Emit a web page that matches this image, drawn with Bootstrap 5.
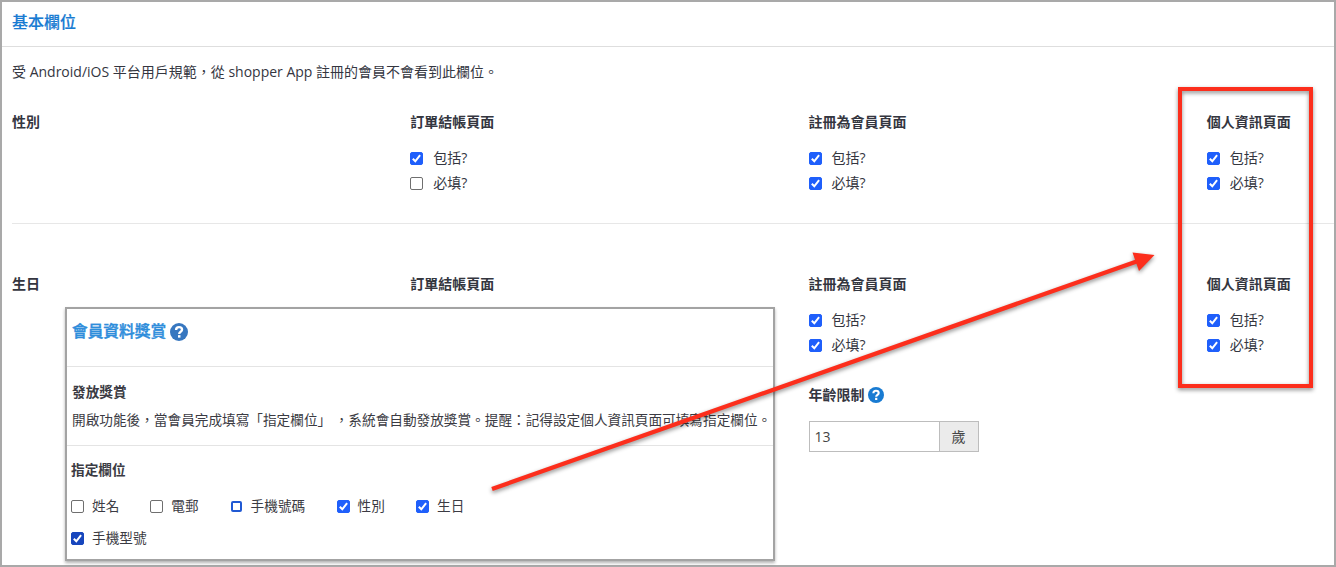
<!DOCTYPE html>
<html lang="zh-Hant">
<head>
<meta charset="utf-8">
<meta name="viewport" content="width=device-width, initial-scale=1">
<title>基本欄位</title>
<link href="https://cdn.jsdelivr.net/npm/bootstrap@5.3.0/dist/css/bootstrap.min.css" rel="stylesheet">
<script src="https://cdn.jsdelivr.net/npm/bootstrap@5.3.0/dist/js/bootstrap.bundle.min.js" defer></script>
<style>
  body { font: 14px/20px "Open Sans", "Noto Sans CJK TC", sans-serif; color: #34363f; background: #fff; }
  .frame { height: 567px; border: 2px solid #a9a9a9; }
  .panel-title { height: 45px; padding: 9px 10px 11px; font-size: 16px; font-weight: 500; color: #187bd2; -webkit-text-stroke: .2px #187bd2; border-bottom: 1px solid #dedede; }
  .intro { padding: 15px 10px 0; height: 65px; }
  .fields { width: 1593px; margin-left: 10px; }
  .fields > div { width: 398.25px; flex: none; }
  .fields-first { height: 112px; border-bottom: 1px solid #e7e7e7; }
  .fields-second { padding-top: 50px; }
  .strong-label { font-weight: 700; }
  .option { height: 25px; gap: 10px; }
  .option span { margin-top: -2px; }
  .options { padding-top: 14px; }
  .form-check-input { width: 13px; height: 13px; margin: 0; border: 1px solid #6f6f6f; border-radius: 2px !important; flex: none; }
  .form-check-input:checked[type=checkbox] { background-color: #1f5ffb; border-color: #1f5ffb; background-size: 13px 13px; background-image: url("data:image/svg+xml,%3csvg xmlns='http://www.w3.org/2000/svg' viewBox='0 0 13 13'%3e%3cpath fill='none' stroke='%23fff' stroke-width='2' d='M2.800 6.800 5.300 9.300 10.100 3.200'/%3e%3c/svg%3e"); }
  .age-limit { margin-top: 27px; gap: 3px; }
  .age-group { width: 170px; margin-top: 16px; }
  .age-group .form-control, .age-group .input-group-text { height: 31px; border: 1px solid #bdbdbd; border-radius: 0; font-size: 14px; line-height: 20px; color: #444; }
  .age-group .form-control { padding: 4px 5px; }
  .age-group .input-group-text { width: 40px; padding: 0; justify-content: center; background: #ebebeb; }
  .inset { left: 65px; top: 307px; width: 710px; height: 254px; border: 2px solid #a3a3a3; background: #fff; box-shadow: 0 2px 3px rgba(0,0,0,.3); font-size: 13.65px; color: #3b3b43; }
  .inset-title { height: 58px; padding: 13px 5px 0; font-size: 15.7px; color: #2e8ddb; font-weight: 500; -webkit-text-stroke: .4px #2e8ddb; border-bottom: 1px solid #e4e4e4; gap: 4px; }
  .inset-title svg { margin-top: 1px; }
  .inset-body { height: 79px; padding: 11px 5px 0; border-bottom: 1px solid #e4e4e4; line-height: 28px; }
  .inset-pick { padding: 14px 4px 0; }
  .inset-options { padding-top: 16px; row-gap: 12px; }
  .inset-options .option { height: 20px; gap: 8px; }
  .inset-options .option span { margin-top: -1px; }
  .inset-options .option:nth-child(1), .inset-options .option:nth-child(2) { width: 79.3px; }
  .inset-options .option:nth-child(3) { width: 107px; }
  .inset-options .option:nth-child(4) { width: 79.400px; }
  .inset-options .option:nth-child(5) { width: 280px; }
  .inset .form-check-input.pressed:checked { background-color: #1746bd; border-color: #1746bd; }
  .inset .focused { width: 11px; height: 11px; margin: 0 1px; border: 2px solid #2059d3; }
  .highlight { left: 1178px; top: 87px; width: 135px; height: 301px; border: 4px solid #fc2e1c; filter: drop-shadow(0 2px 2px rgba(0,0,0,.45)); }
  .arrow { left: 0; top: 0; filter: drop-shadow(0 2px 2px rgba(0,0,0,.45)); }
</style>
</head>
<body>
<main class="frame overflow-hidden">
  <h1 class="panel-title d-flex align-items-center mb-0">基本欄位</h1>
  <p class="intro mb-0">受 Android/iOS 平台用戶規範，從 shopper App 註冊的會員不會看到此欄位。</p>

  <section class="fields fields-first d-flex">
    <div class="strong-label">性別</div>
    <div>
      <div class="strong-label">訂單結帳頁面</div>
      <div class="options">
        <label class="option d-flex align-items-center"><input class="form-check-input" type="checkbox" checked><span>包括?</span></label>
        <label class="option d-flex align-items-center"><input class="form-check-input" type="checkbox"><span>必填?</span></label>
      </div>
    </div>
    <div>
      <div class="strong-label">註冊為會員頁面</div>
      <div class="options">
        <label class="option d-flex align-items-center"><input class="form-check-input" type="checkbox" checked><span>包括?</span></label>
        <label class="option d-flex align-items-center"><input class="form-check-input" type="checkbox" checked><span>必填?</span></label>
      </div>
    </div>
    <div>
      <div class="strong-label">個人資訊頁面</div>
      <div class="options">
        <label class="option d-flex align-items-center"><input class="form-check-input" type="checkbox" checked><span>包括?</span></label>
        <label class="option d-flex align-items-center"><input class="form-check-input" type="checkbox" checked><span>必填?</span></label>
      </div>
    </div>
  </section>

  <section class="fields fields-second d-flex">
    <div class="strong-label">生日</div>
    <div class="strong-label">訂單結帳頁面</div>
    <div>
      <div class="strong-label">註冊為會員頁面</div>
      <div class="options">
        <label class="option d-flex align-items-center"><input class="form-check-input" type="checkbox" checked><span>包括?</span></label>
        <label class="option d-flex align-items-center"><input class="form-check-input" type="checkbox" checked><span>必填?</span></label>
      </div>
      <div class="age-limit strong-label d-flex align-items-center">年齡限制
        <svg width="16" height="16" viewBox="0 0 16 16" fill="none"><circle cx="8" cy="8" r="8" fill="#187bd2"/><path d="M5.400 6.200C5.400 4.600 6.500 3.700 8 3.700c1.600 0 2.700.9 2.700 2.300 0 1.900-2.500 1.800-2.500 3.700" stroke="#fff" stroke-width="2.100"/><path d="M7.100 10.800h2.200v2.200H7.100z" fill="#fff"/></svg>
      </div>
      <div class="input-group age-group flex-nowrap">
        <input class="form-control" type="text" value="13" aria-label="年齡限制">
        <span class="input-group-text">歲</span>
      </div>
    </div>
    <div>
      <div class="strong-label">個人資訊頁面</div>
      <div class="options">
        <label class="option d-flex align-items-center"><input class="form-check-input" type="checkbox" checked><span>包括?</span></label>
        <label class="option d-flex align-items-center"><input class="form-check-input" type="checkbox" checked><span>必填?</span></label>
      </div>
    </div>
  </section>
</main>

<aside class="inset position-absolute">
  <h2 class="inset-title d-flex align-items-start mb-0">會員資料獎賞
    <svg width="18" height="18" viewBox="0 0 16 16" fill="none"><circle cx="8" cy="8" r="8" fill="#3777c0"/><path d="M5.400 6.200C5.400 4.600 6.500 3.700 8 3.700c1.600 0 2.700.9 2.700 2.300 0 1.900-2.500 1.800-2.500 3.700" stroke="#fff" stroke-width="2.100"/><path d="M7.100 10.800h2.200v2.200H7.100z" fill="#fff"/></svg>
  </h2>
  <div class="inset-body text-nowrap">
    <div class="strong-label">發放獎賞</div>
    <div>開啟功能後，當會員完成填寫「指定欄位」 ，系統會自動發放獎賞。提醒：記得設定個人資訊頁面可填寫指定欄位。</div>
  </div>
  <div class="inset-pick">
    <div class="strong-label">指定欄位</div>
    <div class="inset-options d-flex flex-wrap">
      <label class="option d-flex align-items-center"><input class="form-check-input" type="checkbox"><span>姓名</span></label>
      <label class="option d-flex align-items-center"><input class="form-check-input" type="checkbox"><span>電郵</span></label>
      <label class="option d-flex align-items-center"><input class="form-check-input focused" type="checkbox"><span>手機號碼</span></label>
      <label class="option d-flex align-items-center"><input class="form-check-input" type="checkbox" checked><span>性別</span></label>
      <label class="option d-flex align-items-center"><input class="form-check-input" type="checkbox" checked><span>生日</span></label>
      <label class="option d-flex align-items-center"><input class="form-check-input pressed" type="checkbox" checked><span>手機型號</span></label>
    </div>
  </div>
</aside>

<div class="highlight position-absolute"></div>
<svg class="arrow position-absolute pe-none" width="1336" height="567" viewBox="0 0 1336 567">
  <path d="M492 489 1138 261" stroke="#fc2e1c" stroke-width="4.300"/>
  <path d="M1154.500 255 1132.500 252.500 1139 271z" fill="#fc2e1c"/>
</svg>
</body>
</html>
